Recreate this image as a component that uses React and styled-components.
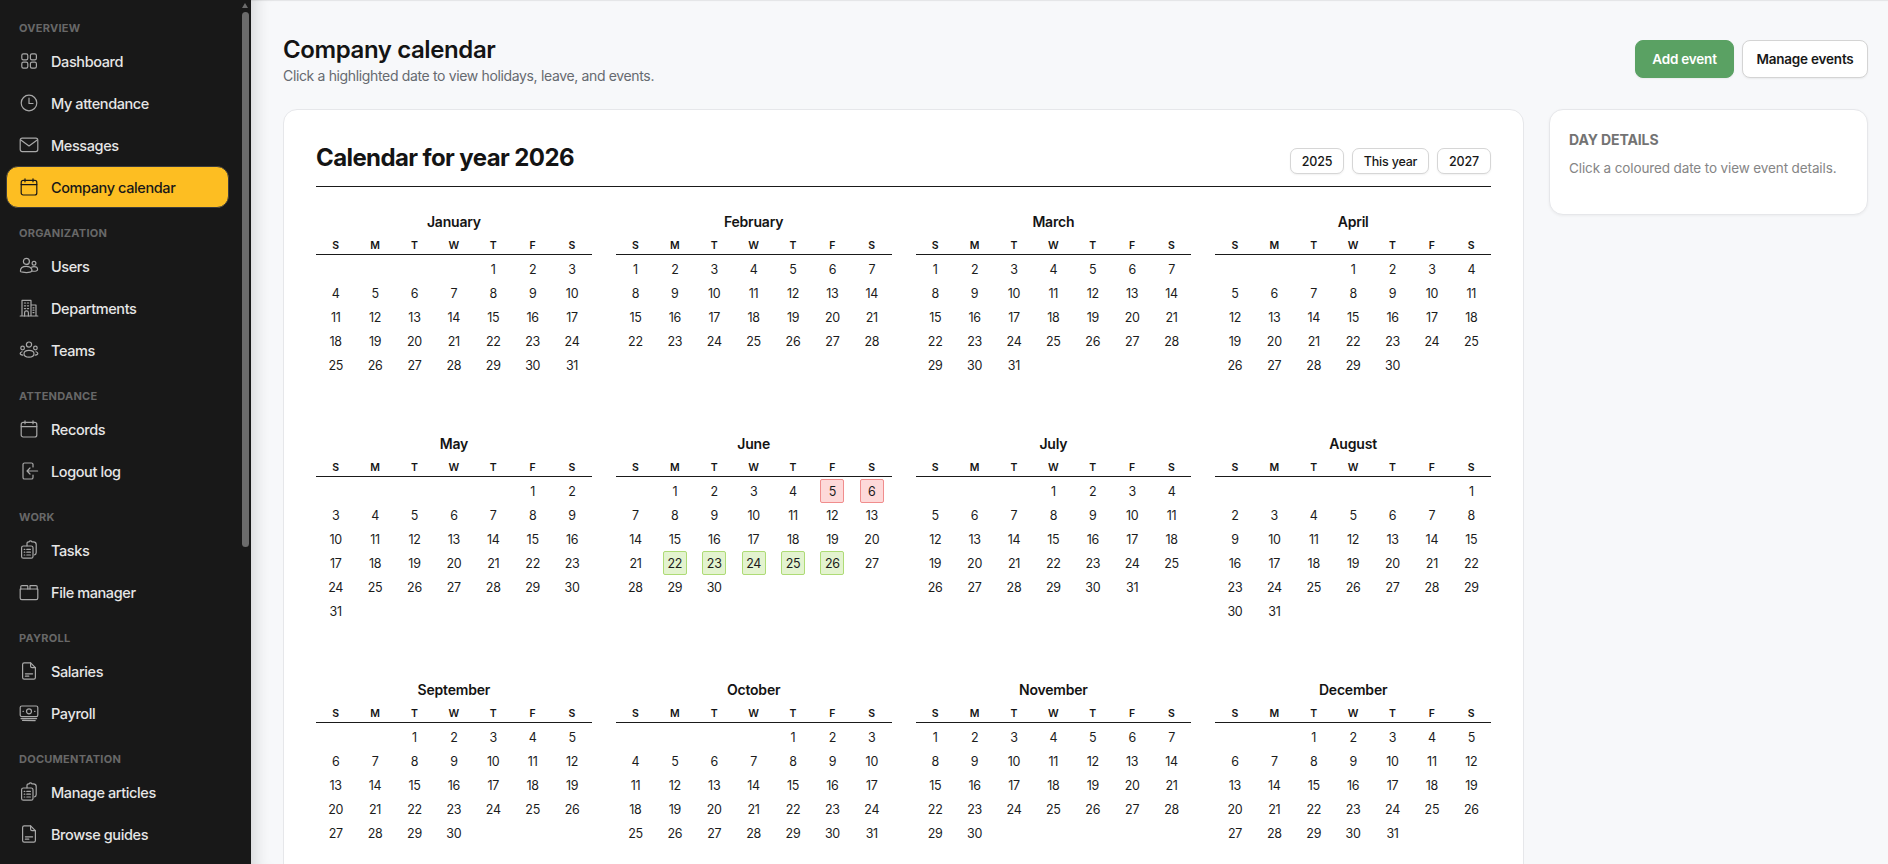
import React from 'react';
import styled, { createGlobalStyle } from 'styled-components';

const GlobalStyle = createGlobalStyle`
  html, body {
    margin: 0;
    height: 100%;
    overflow: hidden;
    background: #f7f8fa;
    font-family: Inter, "Liberation Sans", sans-serif;
    color: #141414;
  }
  * { box-sizing: border-box; }
`;

const Page = styled.div`
  display: flex;
  height: 100vh;
`;

const Sidebar = styled.aside`
  position: relative;
  flex: 0 0 251px;
  height: 100vh;
  overflow: hidden;
  background: #181818;
  padding: 17px 22px 0 6px;
`;

const ScrollArrow = styled.div`
  position: absolute;
  top: 3px;
  right: 3px;
  width: 0;
  height: 0;
  border-left: 3.5px solid transparent;
  border-right: 3.5px solid transparent;
  border-bottom: 5px solid #6b6b6b;
`;

const ScrollThumb = styled.div`
  position: absolute;
  top: 12px;
  right: 2px;
  width: 7px;
  height: 535px;
  border-radius: 4px;
  background: #6b6b6b;
`;

const Section = styled.section`
  margin-bottom: 14px;
`;

const SectionLabel = styled.div`
  height: 20px;
  margin-bottom: 3px;
  padding-left: 13px;
  font-size: 11px;
  line-height: 23px;
  font-weight: 700;
  letter-spacing: 0.25px;
  text-transform: uppercase;
  color: #686868;
`;

const NavItem = styled.a`
  display: flex;
  align-items: center;
  gap: 12px;
  height: 42px;
  padding-left: 13px;
  border-radius: 12px;
  border: 1px solid ${(p) => (p.$active ? '#3c3c3c' : 'transparent')};
  background: ${(p) => (p.$active ? '#fdbe22' : 'transparent')};
  color: ${(p) => (p.$active ? '#181818' : '#e6e6e6')};
  font-size: 14.5px;
  font-weight: 500;
  letter-spacing: -0.4px;
  white-space: nowrap;

  svg {
    flex: 0 0 20px;
    margin-left: -1px;
    color: ${(p) => (p.$active ? '#181818' : '#a8a8a8')};
  }
`;

const Main = styled.main`
  flex: 1;
  min-width: 0;
  height: 100vh;
  overflow: hidden;
  padding: 35px 20px 0 32px;
  box-shadow: inset 18px 0 16px -14px rgba(0, 0, 0, 0.14), inset 0 2px 1px -1px rgba(0, 0, 0, 0.08);
`;

const Header = styled.header`
  display: flex;
  justify-content: space-between;
  align-items: flex-start;
  height: 74px;
`;

const PageTitle = styled.h1`
  margin: 0;
  font-size: 24px;
  line-height: 30px;
  font-weight: 600;
  letter-spacing: -0.4px;
`;

const PageSubtitle = styled.p`
  margin: 2px 0 0;
  font-size: 14px;
  line-height: 18px;
  color: #666a70;
  letter-spacing: -0.35px;
`;

const HeaderActions = styled.div`
  display: flex;
  gap: 8px;
  margin-top: 5px;
`;

const ActionButton = styled.button`
  height: 38px;
  padding: 0;
  width: ${(p) => (p.$primary ? '99px' : '126px')};
  border-radius: 8px;
  border: 1px solid ${(p) => (p.$primary ? '#5aa163' : '#d4d4d4')};
  background: ${(p) => (p.$primary ? '#5aa163' : '#fff')};
  color: ${(p) => (p.$primary ? '#fff' : '#181818')};
  font-family: inherit;
  font-size: 13.5px;
  font-weight: 600;
  letter-spacing: -0.2px;
  box-shadow: 0 1px 2px rgba(0, 0, 0, 0.06);
`;

const Columns = styled.div`
  display: grid;
  grid-template-columns: 1241px 319px;
  gap: 25px;
  align-items: start;
`;

const Card = styled.div`
  background: #fff;
  border: 1px solid #e6e7ea;
  border-radius: 14px;
`;

const CalendarCard = styled(Card)`
  padding: 32px 32px 40px;
`;

const CalendarHead = styled.div`
  display: flex;
  justify-content: space-between;
  align-items: flex-start;
  height: 45px;
  border-bottom: 1px solid #1a1a1a;
`;

const CalendarTitle = styled.h2`
  margin: 0;
  font-size: 24px;
  line-height: 32px;
  font-weight: 700;
  letter-spacing: -0.6px;
`;

const YearButtons = styled.div`
  display: flex;
  gap: 8px;
  margin-top: 6px;
`;

const YearButton = styled.button`
  height: 26px;
  width: ${(p) => p.$width}px;
  padding: 0;
  border-radius: 7px;
  border: 1px solid #d6d6d6;
  background: #fff;
  color: #181818;
  font-family: inherit;
  font-size: 12.5px;
  font-weight: 500;
  letter-spacing: -0.2px;
  box-shadow: 0 1px 2px rgba(0, 0, 0, 0.06);
`;

const MonthGrid = styled.div`
  display: grid;
  grid-template-columns: repeat(4, 1fr);
  column-gap: 24px;
  row-gap: 56px;
  margin-top: 24px;
`;

const MonthName = styled.div`
  height: 20px;
  font-size: 14px;
  line-height: 22px;
  font-weight: 600;
  text-align: center;
  letter-spacing: -0.2px;
`;

const WeekRow = styled.div`
  display: grid;
  grid-template-columns: repeat(7, 1fr);
  height: 24px;
  padding-top: 8px;
  border-bottom: 1px solid #1a1a1a;
  font-size: 10.5px;
  line-height: 14px;
  font-weight: 600;
  text-align: center;
`;

const DayGrid = styled.div`
  display: grid;
  grid-template-columns: repeat(7, 1fr);
  grid-auto-rows: 24px;
  padding-top: 2px;
  justify-items: center;
`;

const tones = {
  red: 'background: #fdd9d9; border-color: #f08d8d;',
  green: 'background: #e3f3cf; border-color: #aedb76;',
};

const Day = styled.div`
  width: 24px;
  height: 24px;
  display: flex;
  align-items: center;
  justify-content: center;
  border: 1px solid transparent;
  border-radius: 2px;
  font-size: 12.5px;
  letter-spacing: -0.3px;
  color: #1c1c1c;
  ${(p) => tones[p.$tone] || ''}
`;

const DetailsCard = styled(Card)`
  height: 106px;
  padding: 20px 20px 20px 19px;
  box-shadow: 0 1px 3px rgba(0, 0, 0, 0.05);
`;

const DetailsTitle = styled.div`
  font-size: 14px;
  line-height: 20px;
  font-weight: 700;
  color: #737373;
  letter-spacing: -0.1px;
`;

const DetailsText = styled.div`
  margin-top: 8px;
  font-size: 13.5px;
  line-height: 20px;
  color: #858585;
  letter-spacing: -0.12px;
`;

const Icon = ({ children }) => (
  <svg width="20" height="20" viewBox="0 0 20 20" fill="none" stroke="currentColor" strokeWidth="1.2" strokeLinecap="round" strokeLinejoin="round">
    {children}
  </svg>
);

const icons = {
  dashboard: (
    <>
      <rect x="2.8" y="2.8" width="6" height="6" rx="1.6" />
      <rect x="11.4" y="2.8" width="6" height="6" rx="1.6" />
      <rect x="2.8" y="11.2" width="6" height="6" rx="1.6" />
      <rect x="11.4" y="11.2" width="6" height="6" rx="1.6" />
    </>
  ),
  clock: (
    <>
      <circle cx="10" cy="10" r="7.8" />
      <path d="M10 5.2v5.3h4" />
    </>
  ),
  mail: (
    <>
      <rect x="1.2" y="3.2" width="17.6" height="13.4" rx="2" />
      <path d="M1.8 5l8.2 6 8.2-6" />
    </>
  ),
  calendar: (
    <>
      <rect x="2.2" y="3.4" width="15.6" height="14.6" rx="2" />
      <path d="M2.2 7.6h15.6M6 1.8v3M14 1.8v3" />
    </>
  ),
  users: (
    <>
      <circle cx="7.4" cy="5.4" r="3" />
      <circle cx="15" cy="7.2" r="1.9" />
      <path d="M1.4 15.2c0-3 2.6-4.8 6-4.8 2.4 0 4.4 1 5.3 2.6.5 1 .2 2.8-1.7 3.2-1.2.3-5.4.4-7.2 0-1.4-.2-2.4-.8-2.4-1z" />
      <path d="M12.6 11.2c.7-.4 1.5-.6 2.4-.6 2 0 3.6 1.2 3.6 2.8 0 1.6-1.8 2-5.6 1.8" />
    </>
  ),
  building: (
    <>
      <path d="M1.2 18h17.6M3 18V2.4h9V18M12 7h5v11" />
      <path d="M5.4 5h1.2M8.4 5h1.2M5.4 7.8h1.2M8.4 7.8h1.2M5.4 10.6h1.2M8.4 10.6h1.2M14 9.8h1M14 12.2h1M14 14.6h1" />
      <path d="M5.6 18v-3.2a1.9 1.9 0 0 1 3.8 0V18" />
    </>
  ),
  teams: (
    <>
      <circle cx="10" cy="4.6" r="2.6" />
      <circle cx="3.6" cy="8" r="1.8" />
      <circle cx="16.4" cy="8" r="1.8" />
      <path d="M5 13.8c0-2 2.2-3.4 5-3.4s5 1.4 5 3.4-2.2 3.4-5 3.4-5-1.4-5-3.4z" />
      <path d="M3 11.8c-1 .4-1.8 1-1.8 1.8 0 .9 1.2 1.4 2.6 1.6M17 11.8c1 .4 1.8 1 1.8 1.8 0 .9-1.2 1.4-2.6 1.6" />
    </>
  ),
  logout: (
    <>
      <path d="M14 6V3.6A1.6 1.6 0 0 0 12.4 2H5.6A1.6 1.6 0 0 0 4 3.6v12.8A1.6 1.6 0 0 0 5.6 18h6.8a1.6 1.6 0 0 0 1.6-1.6V14" />
      <path d="M18.6 10H8M11 7l-3 3 3 3" />
    </>
  ),
  tasks: (
    <>
      <path d="M8 5.8V3.4c0-.9.7-1.6 1.6-1.6h.6a1.4 1.4 0 0 1 2.6 0h1.4c1.6 0 3 1 3 2.6v8.2c0 1.2-.6 2-1.6 2.2" />
      <rect x="2.6" y="6" width="11.4" height="12.2" rx="1.8" />
      <path d="M5.2 9.4h.6M7.8 9.4h3.6M5.2 12.2h.6M7.8 12.2h3.6M5.2 15h.6M7.8 15h3.6" />
    </>
  ),
  folder: (
    <>
      <path d="M1.2 7v9c0 .9.7 1.6 1.6 1.6h14.4c.9 0 1.6-.7 1.6-1.6V7M1.2 7h17.6" />
      <path d="M1.8 7V4.8c0-.7.5-1.2 1.2-1.2h5c.5 0 .8.3.8.8V7M11 7V3.6h6c.7 0 1.2.5 1.2 1.2V7" />
    </>
  ),
  doc: (
    <>
      <path d="M11.6 1.8H5.2c-.9 0-1.6.7-1.6 1.6v13.2c0 .9.7 1.6 1.6 1.6h9.6c.9 0 1.6-.7 1.6-1.6V6.6l-4.8-4.8z" />
      <path d="M11.6 1.8v3.4c0 .8.6 1.4 1.4 1.4h3.4M6.4 12.8h7.2M6.4 15.2h3.4" />
    </>
  ),
  money: (
    <>
      <rect x="1.2" y="3" width="17.6" height="10.6" rx="1.6" />
      <circle cx="10" cy="8.3" r="2.5" />
      <path d="M4 8.3h.4M15.6 8.3h.4M2 15.6h15.6M3.6 17.4l12.6.2" />
    </>
  ),
};

const nav = [
  { label: 'Overview', items: [['Dashboard', 'dashboard'], ['My attendance', 'clock'], ['Messages', 'mail'], ['Company calendar', 'calendar', true]] },
  { label: 'Organization', items: [['Users', 'users'], ['Departments', 'building'], ['Teams', 'teams']] },
  { label: 'Attendance', items: [['Records', 'calendar'], ['Logout log', 'logout']] },
  { label: 'Work', items: [['Tasks', 'tasks'], ['File manager', 'folder']] },
  { label: 'Payroll', items: [['Salaries', 'doc'], ['Payroll', 'money']] },
  { label: 'Documentation', items: [['Manage articles', 'tasks'], ['Browse guides', 'doc']] },
];

const monthNames = ['January', 'February', 'March', 'April', 'May', 'June', 'July', 'August', 'September', 'October', 'November', 'December'];
const weekdays = ['S', 'M', 'T', 'W', 'T', 'F', 'S'];
const year = 2026;

// June 2026: two red days and one green work week
const toneFor = (month, day) => {
  if (month !== 5) return undefined;
  if (day === 5 || day === 6) return 'red';
  if (day >= 22 && day <= 26) return 'green';
  return undefined;
};

const Month = ({ index }) => {
  const offset = new Date(year, index, 1).getDay();
  const count = new Date(year, index + 1, 0).getDate();
  const cells = [...Array(offset).fill(null), ...Array.from({ length: count }, (_, i) => i + 1)];
  return (
    <div>
      <MonthName>{monthNames[index]}</MonthName>
      <WeekRow>
        {weekdays.map((d, i) => <div key={i}>{d}</div>)}
      </WeekRow>
      <DayGrid>
        {cells.map((d, i) => (d ? <Day key={i} $tone={toneFor(index, d)}>{d}</Day> : <div key={i} />))}
      </DayGrid>
    </div>
  );
};

const App = () => {
  return (
    <Page>
      <GlobalStyle />
      <Sidebar>
        {nav.map((section) => (
          <Section key={section.label}>
            <SectionLabel>{section.label}</SectionLabel>
            {section.items.map(([label, icon, active]) => (
              <NavItem key={label} $active={active}>
                <Icon>{icons[icon]}</Icon>
                {label}
              </NavItem>
            ))}
          </Section>
        ))}
        <ScrollArrow />
        <ScrollThumb />
      </Sidebar>
      <Main>
        <Header>
          <div>
            <PageTitle>Company calendar</PageTitle>
            <PageSubtitle>Click a highlighted date to view holidays, leave, and events.</PageSubtitle>
          </div>
          <HeaderActions>
            <ActionButton $primary>Add event</ActionButton>
            <ActionButton>Manage events</ActionButton>
          </HeaderActions>
        </Header>
        <Columns>
          <CalendarCard>
            <CalendarHead>
              <CalendarTitle>Calendar for year 2026</CalendarTitle>
              <YearButtons>
                <YearButton $width={54}>2025</YearButton>
                <YearButton $width={77}>This year</YearButton>
                <YearButton $width={54}>2027</YearButton>
              </YearButtons>
            </CalendarHead>
            <MonthGrid>
              {monthNames.map((m, i) => <Month key={m} index={i} />)}
            </MonthGrid>
          </CalendarCard>
          <DetailsCard>
            <DetailsTitle>DAY DETAILS</DetailsTitle>
            <DetailsText>Click a coloured date to view event details.</DetailsText>
          </DetailsCard>
        </Columns>
      </Main>
    </Page>
  );
};

export default App;
